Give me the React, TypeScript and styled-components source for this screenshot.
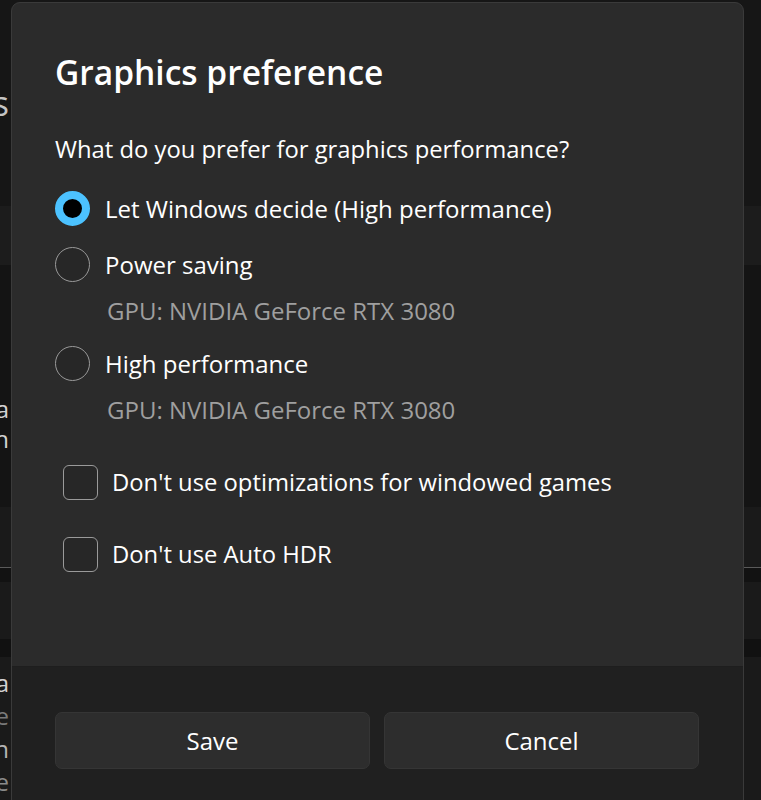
import * as React from 'react';
import styled, {createGlobalStyle} from 'styled-components';

const GlobalStyle = createGlobalStyle`
  html, body {
    margin: 0;
    padding: 0;
    background: #141414;
  }
  body {
    font-family: "Open Sans", "Noto Sans", sans-serif;
    color: #ffffff;
  }
`;

const Page = styled.div`
  position: relative;
  width: 761px;
  height: 800px;
  overflow: hidden;
  background: #141414;
`;

// the settings page that peeks out behind the dialog
const Backdrop = styled.div`
  display: flex;
  flex-direction: column;
`;

const Band = styled.div<{ $h: number; $bg: string }>`
  height: ${p => p.$h}px;
  background: ${p => p.$bg};
  display: flex;
  flex-direction: column;
  justify-content: center;
`;

const SideLine = styled.div<{ $size: number; $color: string; $lh: number }>`
  width: 9px;
  overflow: hidden;
  display: flex;
  justify-content: flex-end;
  white-space: nowrap;
  font-size: ${p => p.$size}px;
  line-height: ${p => p.$lh}px;
  color: ${p => p.$color};
`;

const Dialog = styled.div`
  position: absolute;
  left: 11px;
  top: 2px;
  width: 733px;
  height: 840px;
  box-sizing: border-box;
  border: 1px solid #3a3a3a;
  border-radius: 9px;
  background: #2b2b2b;
  overflow: hidden;
  display: flex;
  flex-direction: column;
`;

const Body = styled.div`
  height: 663px;
  box-sizing: border-box;
  padding: 46px 43px 0 43px;
  display: flex;
  flex-direction: column;
`;

const Title = styled.h1`
  margin: 0;
  font-size: 33.5px;
  line-height: 46px;
  font-weight: 600;
  color: #ffffff;
`;

const Question = styled.p`
  margin: 38px 0 0 0;
  font-size: 23.8px;
  line-height: 32px;
  color: #ffffff;
`;

const Options = styled.div`
  margin-top: 23px;
  display: flex;
  flex-direction: column;
  gap: 16px;
`;

const OptionRow = styled.div`
  height: 40px;
  display: flex;
  align-items: center;
  gap: 15px;
  font-size: 24px;
`;

const Radio = styled.span<{ $checked?: boolean }>`
  width: 35px;
  height: 35px;
  box-sizing: border-box;
  border-radius: 50%;
  flex: none;
  ${p => p.$checked
    ? `border: 8.5px solid #4cc2ff; background: #000000;`
    : `border: 1.5px solid #9a9a9a; background: #272727;`}
`;

const Hint = styled.div`
  margin-top: 11px;
  padding-left: 52px;
  font-size: 24px;
  line-height: 32px;
  color: #9f9f9f;
`;

const Checks = styled.div`
  margin-top: 36px;
  display: flex;
  flex-direction: column;
  gap: 32px;
`;

const CheckRow = styled.div`
  height: 40px;
  display: flex;
  align-items: center;
  gap: 14px;
  padding-left: 8px;
  font-size: 23.8px;
`;

const Box = styled.span`
  width: 35px;
  height: 35px;
  box-sizing: border-box;
  border: 1.5px solid #9a9a9a;
  border-radius: 6px;
  background: #272727;
  flex: none;
`;

const Footer = styled.div`
  flex: 1;
  background: #202020;
  border-top: 1px solid #1e1e1e;
  padding: 45px 43px 0 43px;
  display: flex;
  gap: 14px;
  align-items: flex-start;
`;

const Button = styled.button`
  width: 315px;
  height: 57px;
  border: 1px solid #353535;
  border-radius: 7px;
  background: #2d2d2d;
  color: #ffffff;
  font-family: inherit;
  font-size: 24px;
  padding: 0;
`;

interface IOption {
    label: string
    hint?: string
    checked?: boolean
}

const options: IOption[] = [
    {label: 'Let Windows decide (High performance)', checked: true},
    {label: 'Power saving', hint: 'GPU: NVIDIA GeForce RTX 3080'},
    {label: 'High performance', hint: 'GPU: NVIDIA GeForce RTX 3080'},
];

const checks = [
    "Don't use optimizations for windowed games",
    "Don't use Auto HDR",
];

export default function App() {
    return (
        <Page>
            <GlobalStyle/>
            <Backdrop>
                <Band $h={206} $bg="#161616">
                    <SideLine $size={34} $lh={40} $color="#c4c4c4">Graphics</SideLine>
                </Band>
                <Band $h={59} $bg="#1c1c1c"/>
                <Band $h={128} $bg="#141414"/>
                <Band $h={60} $bg="#141414">
                    <SideLine $size={24} $lh={32} $color="#d2d2d2">media</SideLine>
                    <SideLine $size={24} $lh={32} $color="#d2d2d2">graph</SideLine>
                </Band>
                <Band $h={54} $bg="#141414"/>
                <Band $h={60} $bg="#1a1a1a"/>
                <Band $h={1} $bg="#5a5a5a"/>
                <Band $h={14} $bg="#121212"/>
                <Band $h={57} $bg="#1a1a1a"/>
                <Band $h={18} $bg="#111111"/>
                <Band $h={150} $bg="#1a1a1a">
                    <SideLine $size={24} $lh={33} $color="#d2d2d2">camera</SideLine>
                    <SideLine $size={24} $lh={33} $color="#7a7a7a">mode</SideLine>
                    <SideLine $size={24} $lh={33} $color="#b4b4b4">screen</SideLine>
                    <SideLine $size={24} $lh={33} $color="#8a8a8a">site</SideLine>
                </Band>
            </Backdrop>
            <Dialog>
                <Body>
                    <Title>Graphics preference</Title>
                    <Question>What do you prefer for graphics performance?</Question>
                    <Options>
                        {options.map((o, i) =>
                            <div key={i}>
                                <OptionRow>
                                    <Radio $checked={o.checked}/>
                                    <span>{o.label}</span>
                                </OptionRow>
                                {o.hint && <Hint>{o.hint}</Hint>}
                            </div>
                        )}
                    </Options>
                    <Checks>
                        {checks.map((c, i) =>
                            <CheckRow key={i}>
                                <Box/>
                                <span>{c}</span>
                            </CheckRow>
                        )}
                    </Checks>
                </Body>
                <Footer>
                    <Button>Save</Button>
                    <Button>Cancel</Button>
                </Footer>
            </Dialog>
        </Page>
    );
}
